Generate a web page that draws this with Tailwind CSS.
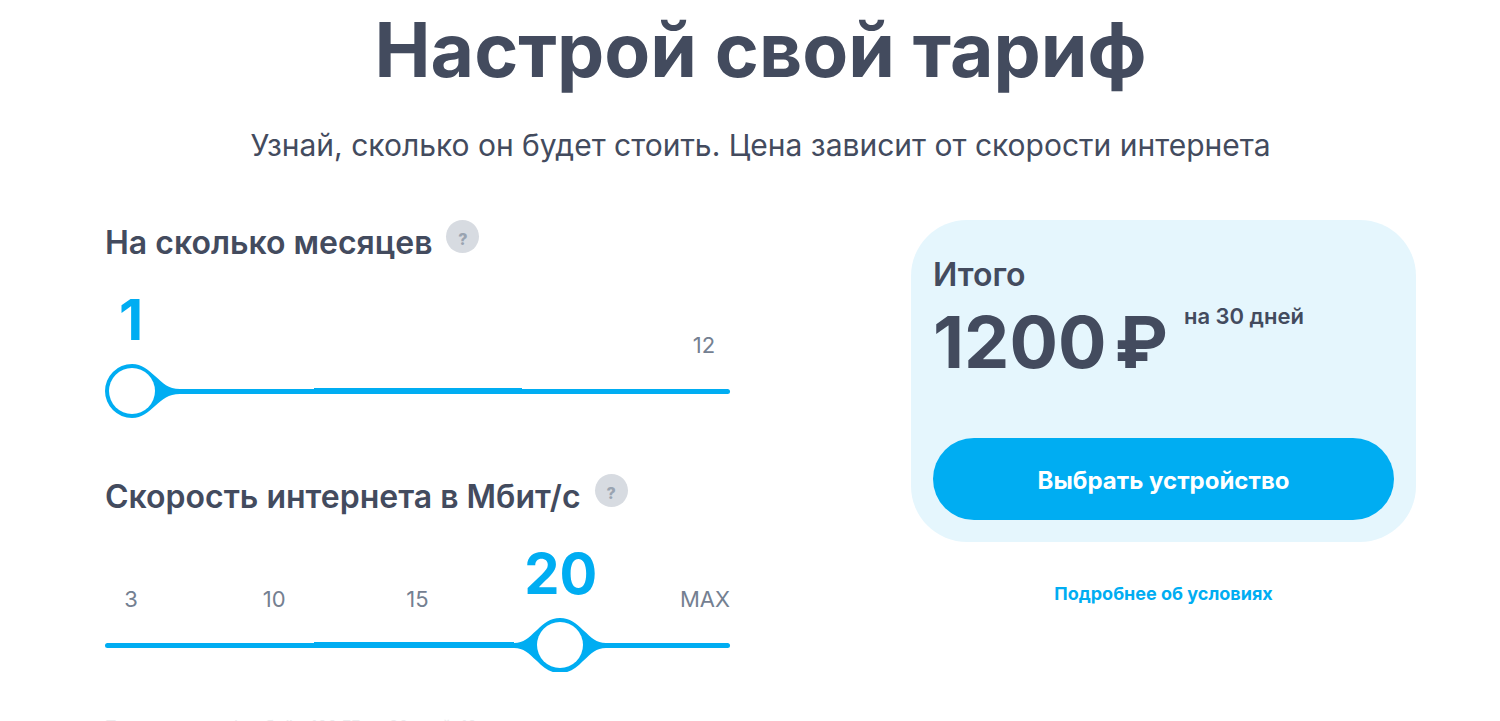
<!DOCTYPE html>
<html lang="ru">
<head>
  <meta charset="UTF-8" />
  <meta name="viewport" content="width=device-width, initial-scale=1.0" />
  <title>Настрой свой тариф</title>
  <script src="https://cdn.jsdelivr.net/npm/@tailwindcss/browser@4"></script>
</head>
<body class="bg-white text-[#434b5e] font-['Inter',sans-serif] overflow-x-hidden">
  <main class="pl-[105px] pr-[84px] pt-2">
    <h1 class="text-center text-[75px] leading-[84px] font-bold whitespace-nowrap">Настрой свой тариф</h1>
    <p class="mt-8 text-center text-[30px] leading-[42px] whitespace-nowrap">Узнай, сколько он будет стоить. Цена зависит от скорости интернета</p>

    <div class="mt-[54px] grid grid-cols-[625fr_505fr] gap-[181px] items-start">
      <div>
        <!-- Months -->
        <section>
          <div class="flex items-start gap-[14px]">
            <label for="months" class="pt-[3px] text-[32px] leading-10 font-semibold whitespace-nowrap">На сколько месяцев</label>
            <button type="button" aria-label="Подсказка" class="size-[33px] pt-1 rounded-full bg-[#d7dbe1] text-[#9aa4b1] text-base font-extrabold">?</button>
          </div>
          <div class="mt-[21px] h-[72px] flex items-end justify-between text-[22px] leading-[22px] text-[#748091]">
            <span class="w-[52px] text-center text-[56px] leading-[72px] font-bold text-[#00adf2]">1</span>
            <span class="w-[52px] text-center">12</span>
          </div>
          <div class="relative mt-2 flex items-center">
            <svg class="w-[75px] h-[54px] shrink-0" viewBox="0 0 75 54" fill="#00adf2">
              <path d="M27 0C37 0 43 6 50 12C58 19 63 25 75 25V30C63 30 58 35 50 42C43 48 37 54 27 54A27 27 0 0 1 27 0Z" />
              <circle cx="27" cy="27" r="23" fill="#fff" />
            </svg>
            <div class="flex-1 flex items-end">
              <div class="flex-[134] h-[5px] bg-[#00adf2]"></div>
              <div class="flex-[208] h-[6px] bg-[#00adf2]"></div>
              <div class="flex-[208] h-[5px] rounded-r-sm bg-[#00adf2]"></div>
            </div>
            <input id="months" type="range" min="1" max="12" value="1" class="absolute inset-0 w-full h-full opacity-0 cursor-pointer" />
          </div>
        </section>

        <!-- Speed -->
        <section class="mt-14">
          <div class="flex items-start gap-[14px]">
            <label for="speed" class="pt-[3px] text-[32px] leading-10 font-semibold whitespace-nowrap">Скорость интернета в Мбит/с</label>
            <button type="button" aria-label="Подсказка" class="size-[33px] pt-1 rounded-full bg-[#d7dbe1] text-[#9aa4b1] text-base font-extrabold">?</button>
          </div>
          <div class="mt-[21px] h-[72px] flex items-end justify-between text-[22px] leading-[22px] text-[#748091]">
            <span class="w-[52px] text-center">3</span>
            <span class="w-[52px] text-center">10</span>
            <span class="w-[52px] text-center">15</span>
            <span class="w-[52px] flex justify-center text-[56px] leading-[72px] font-bold text-[#00adf2]">20</span>
            <span class="w-[52px] flex justify-end">MAX</span>
          </div>
          <div class="relative mt-2 flex items-center">
            <div class="flex-[409] flex items-end">
              <div class="flex-[209] h-[5px] rounded-l-sm bg-[#00adf2]"></div>
              <div class="flex-[200] h-[6px] bg-[#00adf2]"></div>
            </div>
            <svg class="w-[92px] h-[54px] shrink-0" viewBox="0 0 92 54" fill="#00adf2">
              <path d="M0 25C10 25 14 20 23 12C30 5 36 0 46 0S62 5 69 12C78 20 82 25 92 25V30C82 30 78 35 69 43C62 50 56 55 46 55S30 50 23 43C14 35 10 30 0 30Z" />
              <circle cx="46" cy="27" r="23" fill="#fff" />
            </svg>
            <div class="flex-[124] h-[5px] rounded-r-sm bg-[#00adf2]"></div>
            <input id="speed" type="range" min="0" max="4" value="3" class="absolute inset-0 w-full h-full opacity-0 cursor-pointer" />
          </div>
        </section>

        <p class="mt-[42px] text-base text-[#ececee]">При смене тарифа объём 100 ГБ на 20 дней, 10</p>
      </div>

      <aside>
        <div class="rounded-[56px] bg-[#e5f6fd] px-[22px] pt-[34px] pb-[22px]">
          <p class="text-[32px] leading-[42px] font-semibold">Итого</p>
          <div class="flex items-start gap-4 whitespace-nowrap">
            <p class="flex gap-2 text-[72px] leading-[92px] font-bold"><span>1200</span><span>₽</span></p>
            <p class="pt-1 text-[22px] leading-8 font-semibold">на 30 дней</p>
          </div>
          <button type="button" class="mt-[50px] w-full h-[82px] pt-1 rounded-full bg-[#00adf2] text-white text-2xl font-bold">Выбрать устройство</button>
        </div>
        <p class="mt-9 text-center">
          <a href="#" class="text-lg leading-8 font-bold text-[#00adf2]">Подробнее об условиях</a>
        </p>
      </aside>
    </div>
  </main>
</body>
</html>
